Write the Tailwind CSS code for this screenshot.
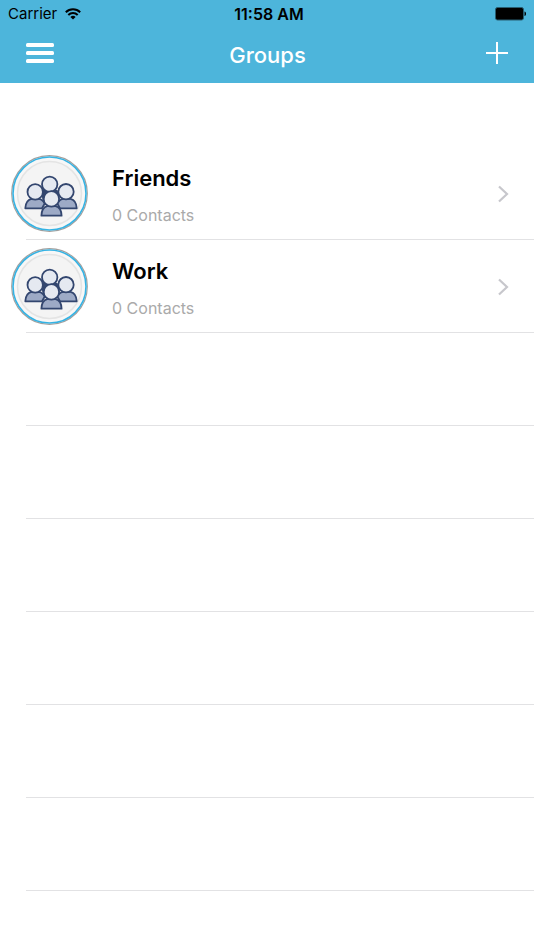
<!DOCTYPE html>
<html lang="en">
<head>
<meta charset="utf-8">
<meta name="viewport" content="width=device-width, initial-scale=1">
<title>Groups</title>
<script src="https://cdn.jsdelivr.net/npm/@tailwindcss/browser@4"></script>
</head>
<body class="min-h-screen overflow-x-hidden bg-white font-['Inter',sans-serif] text-black">
<svg class="hidden" aria-hidden="true">
  <symbol id="avatar" viewBox="0 0 77 77">
    <circle cx="38.5" cy="38.5" r="37.8" fill="#fff" stroke="#a3a09e" stroke-width="1.2"/>
    <circle cx="38.5" cy="38.5" r="36.5" fill="#f7f7f7" stroke="#35b3e4" stroke-width="1.6"/>
    <circle cx="38.5" cy="38.5" r="32" fill="#f4f4f4" stroke="#e4e4e4" stroke-width="1.5"/>
    <g stroke="#33466f" stroke-width="1.8" stroke-linejoin="round">
      <path d="M31 36h15l1 13H33z" fill="#33466f"/>
      <path d="M14.300 53.300c.2-5.500 2.400-8.600 6.200-9.500h7.400c3 .6 4.800 2.400 5.700 5l-2.600 4.500z" fill="#9daac6"/>
      <path d="M65.700 53.300c-.2-5.500-2.400-8.600-6.200-9.500h-7.400c-3 .6-4.800 2.400-5.700 5l2.600 4.500z" fill="#9daac6"/>
      <circle cx="38.700" cy="29.300" r="7.700" fill="#e5e9f1"/>
      <circle cx="24.200" cy="36.900" r="7.700" fill="#e5e9f1"/>
      <circle cx="55" cy="36.700" r="7.700" fill="#e5e9f1"/>
      <path d="M30.400 60.700c.2-5.500 2.200-8.500 5.800-9.500h8.400c3.600 1 5.800 4 6 9.500z" fill="#9daac6"/>
      <circle cx="40.400" cy="43.900" r="7.700" fill="#e5e9f1"/>
    </g>
  </symbol>
  <symbol id="chevron" viewBox="0 0 12 18">
    <path d="M2 1.500l8 7.500-8 7.500" fill="none" stroke="#c7c7cc" stroke-width="2.200"/>
  </symbol>
</svg>

<header class="bg-[#4db5db]">
  <div class="grid h-7 grid-cols-3 items-center px-2 text-base leading-7">
    <div class="flex items-center gap-2">
      <span class="text-[15px]">Carrier</span>
      <svg class="h-3 w-4" viewBox="0 0 16 12" fill="none" stroke="#000" stroke-width="2" aria-label="Wi-Fi">
        <path d="M.8 4.200a10.300 10.300 0 0 1 14.400 0M3.300 7a6.800 6.800 0 0 1 9.400 0"/>
        <path d="M8 11.600L5.400 9a3.700 3.700 0 0 1 5.200 0z" fill="#000" stroke="none"/>
      </svg>
    </div>
    <time class="pl-1 text-center font-semibold">11:58 AM</time>
    <svg class="h-3.5 w-8 justify-self-end" viewBox="0 0 32 14" aria-label="Battery full">
      <rect x="1.500" y=".5" width="28" height="12.500" rx="2" fill="#000" stroke="#285e72"/>
      <path d="M30.500 4.500c2 .5 2 4 0 4.500z"/>
    </svg>
  </div>
  <nav class="grid h-[55px] grid-cols-[1fr_auto_1fr] items-center pb-0.5 pl-[26px] pr-[25px]">
    <button type="button" aria-label="Menu" class="pb-1">
      <svg class="h-5 w-7" viewBox="0 0 28 20" fill="#fff">
        <rect y="0" width="28" height="4" rx="1.500"/>
        <rect y="8" width="28" height="4" rx="1.500"/>
        <rect y="16" width="28" height="4" rx="1.500"/>
      </svg>
    </button>
    <h1 class="text-[22px] font-medium leading-7 text-white">Groups</h1>
    <button type="button" aria-label="Add group" class="justify-self-end pb-1">
      <svg class="size-6" viewBox="0 0 24 24" stroke="#fff" stroke-width="2"><path d="M12 1v22M1 12h22"/></svg>
    </button>
  </nav>
</header>

<main class="pt-16">
  <ul>
    <li class="relative h-[93px]">
      <a href="#friends" class="flex h-full items-center pl-[11px] pr-[25px]">
        <svg class="size-[77px] shrink-0" aria-hidden="true"><use href="#avatar"/></svg>
        <span class="flex grow flex-col gap-[11px] pl-6 pt-1">
          <span class="text-[22px] font-semibold leading-7">Friends</span>
          <span class="text-base leading-6 text-[#aaaaaa]">0 Contacts</span>
        </span>
        <svg class="h-[18px] w-3" aria-hidden="true"><use href="#chevron"/></svg>
      </a>
      <div class="absolute bottom-0 left-[26px] right-0 h-px bg-[#e2e2e4]"></div>
    </li>
    <li class="relative h-[93px]">
      <a href="#work" class="flex h-full items-center pl-[11px] pr-[25px]">
        <svg class="size-[77px] shrink-0" aria-hidden="true"><use href="#avatar"/></svg>
        <span class="flex grow flex-col gap-[11px] pl-6 pt-1">
          <span class="text-[22px] font-semibold leading-7">Work</span>
          <span class="text-base leading-6 text-[#aaaaaa]">0 Contacts</span>
        </span>
        <svg class="h-[18px] w-3" aria-hidden="true"><use href="#chevron"/></svg>
      </a>
      <div class="absolute bottom-0 left-[26px] right-0 h-px bg-[#e2e2e4]"></div>
    </li>
  </ul>
  <div class="pl-[26px]" aria-hidden="true">
    <div class="h-[93px] border-b border-[#e2e2e4]"></div>
    <div class="h-[93px] border-b border-[#e2e2e4]"></div>
    <div class="h-[93px] border-b border-[#e2e2e4]"></div>
    <div class="h-[93px] border-b border-[#e2e2e4]"></div>
    <div class="h-[93px] border-b border-[#e2e2e4]"></div>
    <div class="h-[93px] border-b border-[#e2e2e4]"></div>
  </div>
</main>
</body>
</html>
